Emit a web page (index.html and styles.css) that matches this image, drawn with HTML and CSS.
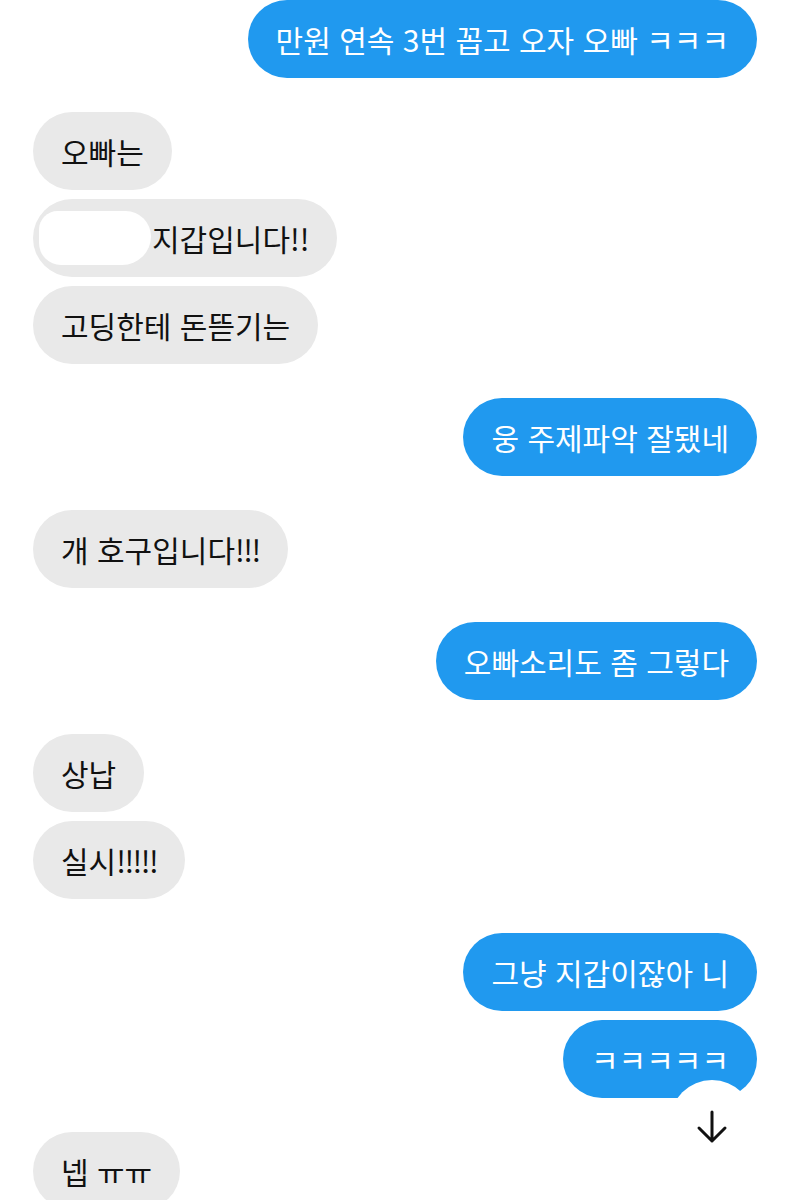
FILE: index.html
```html
<!DOCTYPE html>
<html lang="ko">
<head>
  <meta charset="UTF-8">
  <meta name="viewport" content="width=device-width, initial-scale=1.0">
  <title>대화</title>
  <link rel="stylesheet" href="styles.css">
</head>
<body>
  <div class="chat">
    <div class="group me">
      <div class="bubble">만원 연속 3번 꼽고 오자 오빠 ㅋㅋㅋ</div>
    </div>
    <div class="group you">
      <div class="bubble">오빠는</div>
      <div class="bubble"><span class="blot"></span>지갑입니다!!</div>
      <div class="bubble">고딩한테 돈뜯기는</div>
    </div>
    <div class="group me">
      <div class="bubble">웅 주제파악 잘됐네</div>
    </div>
    <div class="group you">
      <div class="bubble">개 호구입니다<span class="bang">!!!</span></div>
    </div>
    <div class="group me">
      <div class="bubble">오빠소리도 좀 그렇다</div>
    </div>
    <div class="group you">
      <div class="bubble">상납</div>
      <div class="bubble">실시<span class="bang">!!!!!</span></div>
    </div>
    <div class="group me">
      <div class="bubble">그냥 지갑이잖아 니</div>
      <div class="bubble">ㅋㅋㅋㅋㅋ
        <div class="scroll-down">
          <svg width="32" height="34" viewBox="0 0 32 34">
            <path d="M16 2 V31 M3 18 L16 31 L29 18" fill="none" stroke="#111" stroke-width="3" stroke-linecap="round" stroke-linejoin="round"/>
          </svg>
        </div>
      </div>
    </div>
    <div class="group you">
      <div class="bubble">넵 ㅠㅠ</div>
    </div>
  </div>
</body>
</html>
```

FILE: styles.css
```css
* {
  margin: 0;
  padding: 0;
  box-sizing: border-box;
}
body {
  font-family: 'Noto Sans CJK KR', 'Noto Sans', sans-serif;
  background: #fff;
  color: #111;
  overflow: hidden;
}
.chat {
  display: flex;
  flex-direction: column;
  gap: 34px;
  padding: 0 33px;
}
.group {
  display: flex;
  flex-direction: column;
  gap: 9px;
}
.group.me {
  align-items: flex-end;
}
.group.you {
  align-items: flex-start;
}
.bubble {
  position: relative;
  font-size: 30px;
  line-height: 40px;
  padding: 19px 28px;
  border-radius: 39px;
  white-space: nowrap;
}
.me .bubble {
  background: #2099ef;
  color: #fff;
}
.you .bubble {
  background: #e9e9e9;
  color: #111;
}
.bang {
  letter-spacing: -1.5px;
}
.blot {
  display: inline-block;
  vertical-align: top;
  width: 112px;
  height: 54px;
  margin: -7px 1px -7px -22px;
  background: #fff;
  border-radius: 22px 30px 34px 26px;
}
.scroll-down {
  position: absolute;
  left: 107px;
  top: 60px;
  width: 84px;
  height: 84px;
  border-radius: 50%;
  background: #fff;
  display: flex;
  align-items: center;
  justify-content: center;
  padding-top: 10px;
}
```
